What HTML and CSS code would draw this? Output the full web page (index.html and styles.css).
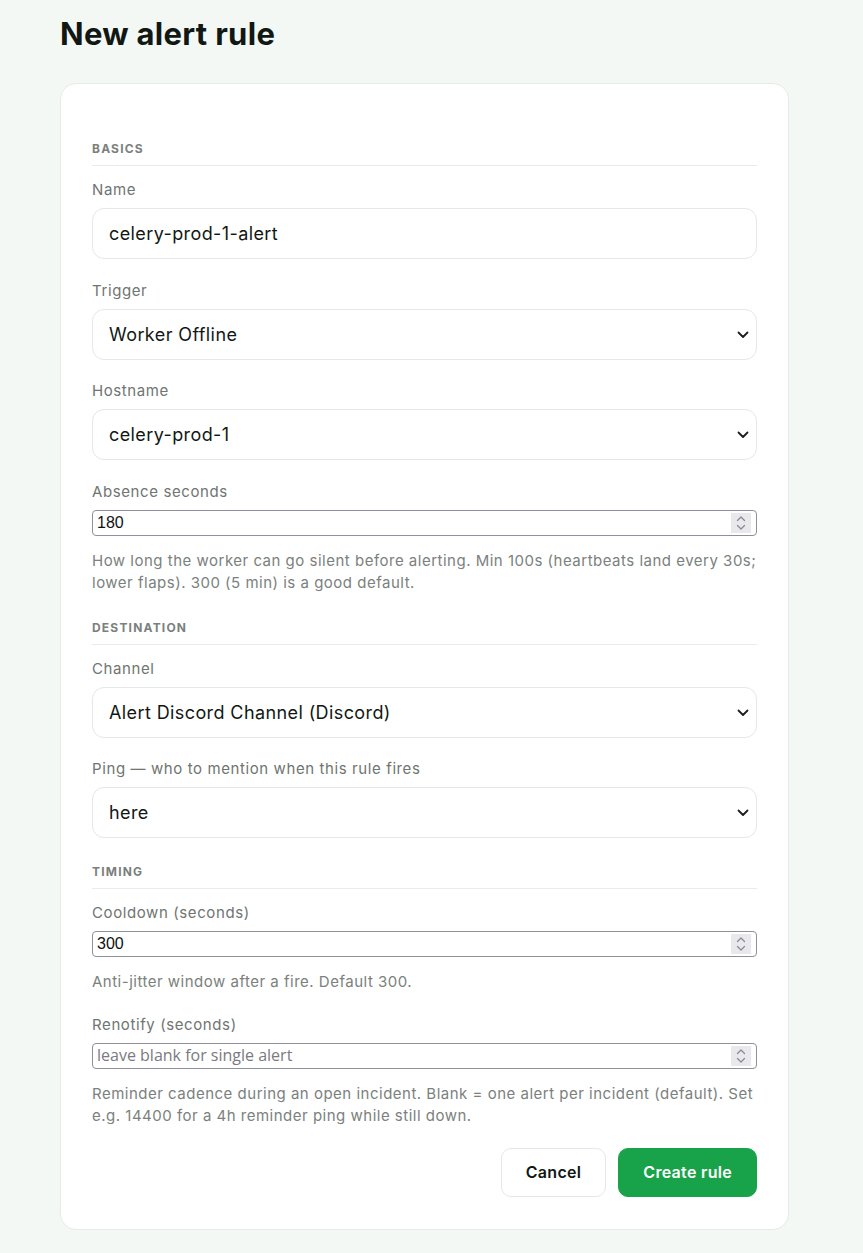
FILE: index.html
```html
<!DOCTYPE html>
<html lang="en">
<head>
    <meta charset="UTF-8">
    <meta name="viewport" content="width=device-width, initial-scale=1.0">
    <title>New alert rule</title>
    <link rel="stylesheet" href="styles.css">
</head>
<body>

    <div class="page">
        <h1>New alert rule</h1>

        <form class="card" id="ruleForm">

            <div class="section">
                <h3 class="section-title">Basics</h3>

                <div class="field">
                    <label for="name">Name</label>
                    <input type="text" id="name" class="text-input" value="celery-prod-1-alert">
                </div>

                <div class="field">
                    <label for="trigger">Trigger</label>
                    <div class="select-wrap">
                        <select id="trigger">
                            <option>Worker Offline</option>
                            <option>Task Failed</option>
                        </select>
                        <svg class="chevron" viewBox="0 0 12 8" width="12" height="8"><path d="M1.5 1.5 6 6l4.5-4.5" fill="none" stroke="#1a1f1c" stroke-width="1.8" stroke-linecap="round" stroke-linejoin="round"/></svg>
                    </div>
                </div>

                <div class="field">
                    <label for="hostname">Hostname</label>
                    <div class="select-wrap">
                        <select id="hostname">
                            <option>celery-prod-1</option>
                            <option>celery-prod-2</option>
                        </select>
                        <svg class="chevron" viewBox="0 0 12 8" width="12" height="8"><path d="M1.5 1.5 6 6l4.5-4.5" fill="none" stroke="#1a1f1c" stroke-width="1.8" stroke-linecap="round" stroke-linejoin="round"/></svg>
                    </div>
                </div>

                <div class="field">
                    <label for="absence">Absence seconds</label>
                    <div class="num-wrap">
                        <input type="number" id="absence" class="num-input" value="180" min="100">
                        <span class="spin"><svg viewBox="0 0 10 16" width="10" height="16"><path d="M1.5 5.5 5 2l3.5 3.5M1.5 10.5 5 14l3.5-3.5" fill="none" stroke="#8a8a96" stroke-width="1.3" stroke-linecap="round" stroke-linejoin="round"/></svg></span>
                    </div>
                    <p class="help">How long the worker can go silent before alerting. Min 100s (heartbeats land every 30s; lower flaps). 300 (5 min) is a good default.</p>
                </div>
            </div>

            <div class="section">
                <h3 class="section-title">Destination</h3>

                <div class="field">
                    <label for="channel">Channel</label>
                    <div class="select-wrap">
                        <select id="channel">
                            <option>Alert Discord Channel (Discord)</option>
                        </select>
                        <svg class="chevron" viewBox="0 0 12 8" width="12" height="8"><path d="M1.5 1.5 6 6l4.5-4.5" fill="none" stroke="#1a1f1c" stroke-width="1.8" stroke-linecap="round" stroke-linejoin="round"/></svg>
                    </div>
                </div>

                <div class="field">
                    <label for="ping">Ping — who to mention when this rule fires</label>
                    <div class="select-wrap">
                        <select id="ping">
                            <option>here</option>
                            <option>everyone</option>
                            <option>nobody</option>
                        </select>
                        <svg class="chevron" viewBox="0 0 12 8" width="12" height="8"><path d="M1.5 1.5 6 6l4.5-4.5" fill="none" stroke="#1a1f1c" stroke-width="1.8" stroke-linecap="round" stroke-linejoin="round"/></svg>
                    </div>
                </div>
            </div>

            <div class="section">
                <h3 class="section-title">Timing</h3>

                <div class="field">
                    <label for="cooldown">Cooldown (seconds)</label>
                    <div class="num-wrap">
                        <input type="number" id="cooldown" class="num-input" value="300">
                        <span class="spin"><svg viewBox="0 0 10 16" width="10" height="16"><path d="M1.5 5.5 5 2l3.5 3.5M1.5 10.5 5 14l3.5-3.5" fill="none" stroke="#8a8a96" stroke-width="1.3" stroke-linecap="round" stroke-linejoin="round"/></svg></span>
                    </div>
                    <p class="help">Anti-jitter window after a fire. Default 300.</p>
                </div>

                <div class="field">
                    <label for="renotify">Renotify (seconds)</label>
                    <div class="num-wrap">
                        <input type="number" id="renotify" class="num-input" placeholder="leave blank for single alert">
                        <span class="spin"><svg viewBox="0 0 10 16" width="10" height="16"><path d="M1.5 5.5 5 2l3.5 3.5M1.5 10.5 5 14l3.5-3.5" fill="none" stroke="#8a8a96" stroke-width="1.3" stroke-linecap="round" stroke-linejoin="round"/></svg></span>
                    </div>
                    <p class="help">Reminder cadence during an open incident. Blank = one alert per incident (default). Set e.g. 14400 for a 4h reminder ping while still down.</p>
                </div>
            </div>

            <div class="actions">
                <button type="button" class="btn btn-cancel">Cancel</button>
                <button type="submit" class="btn btn-primary">Create rule</button>
            </div>
        </form>
    </div>

</body>
</html>
```

FILE: styles.css
```css
body {
    font-family: Inter, "Noto Sans", sans-serif;
    background-color: #f4f8f5;
    color: #111814;
    margin: 0;
}

.page {
    width: 729px;
    padding: 16px 60px 26px;
}

h1 {
    font-size: 31px;
    line-height: 36px;
    font-weight: 700;
    letter-spacing: 0.3px;
    margin: 0 0 31px;
}

.card {
    background: white;
    border: 1px solid #e6ebe7;
    border-radius: 16px;
    padding: 33px 31px 32px;
    box-sizing: border-box;
}

.section {
    margin-top: 26px;
}

.section:first-child {
    margin-top: 24px;
}

.section-title {
    font-size: 12px;
    line-height: 16px;
    font-weight: 700;
    letter-spacing: 1.2px;
    text-transform: uppercase;
    color: #7b807d;
    margin: 0 0 13px;
    padding-bottom: 8px;
    border-bottom: 1px solid #e8ebe9;
}

.field + .field {
    margin-top: 20.5px;
}

label {
    display: block;
    font-size: 15px;
    line-height: 22px;
    letter-spacing: 0.6px;
    color: #6f7571;
    margin-bottom: 7px;
}

.text-input, select {
    display: block;
    width: 100%;
    height: 51px;
    padding: 0 16px;
    border: 1px solid #e5e8e6;
    border-radius: 12px;
    background: white;
    font-family: inherit;
    font-size: 18px;
    letter-spacing: 0.4px;
    color: #111814;
    box-sizing: border-box;
    outline: none;
}

select {
    appearance: none;
    -webkit-appearance: none;
}

.select-wrap,
.num-wrap {
    position: relative;
}

.chevron {
    position: absolute;
    right: 8px;
    top: 22px;
    pointer-events: none;
}

.num-input {
    display: block;
    width: 100%;
    height: 26px;
    padding: 0 30px 0 4px;
    border: 1px solid #8f8f9d;
    border-radius: 4px;
    font-family: "Liberation Sans", Arial, sans-serif;
    font-size: 16px;
    color: #111;
    box-sizing: border-box;
    margin: 0;
}

.num-input::placeholder {
    font-family: "Open Sans", sans-serif;
    color: #7a7a80;
}

.num-input::-webkit-inner-spin-button,
.num-input::-webkit-outer-spin-button {
    -webkit-appearance: none;
    margin: 0;
}

.spin {
    position: absolute;
    right: 6px;
    top: 3px;
    bottom: 3px;
    width: 20px;
    background: #e9e9ed;
    display: flex;
    align-items: center;
    justify-content: center;
    pointer-events: none;
}

.help {
    font-size: 15px;
    line-height: 22px;
    letter-spacing: 0.5px;
    color: #7b817d;
    margin: 14px 0 0;
}

.actions {
    display: flex;
    justify-content: flex-end;
    gap: 12px;
    margin-top: 21px;
}

.btn {
    height: 49px;
    padding: 0 24px;
    border-radius: 10px;
    font-family: inherit;
    font-size: 16px;
    font-weight: 600;
    letter-spacing: 0.3px;
    cursor: pointer;
}

.btn-cancel {
    background: white;
    border: 1px solid #e5e8e6;
    color: #111814;
}

.btn-primary {
    background: #18a34b;
    border: 1px solid #18a34b;
    color: white;
}

.btn-primary:hover {
    background: #138a3f;
}
```
